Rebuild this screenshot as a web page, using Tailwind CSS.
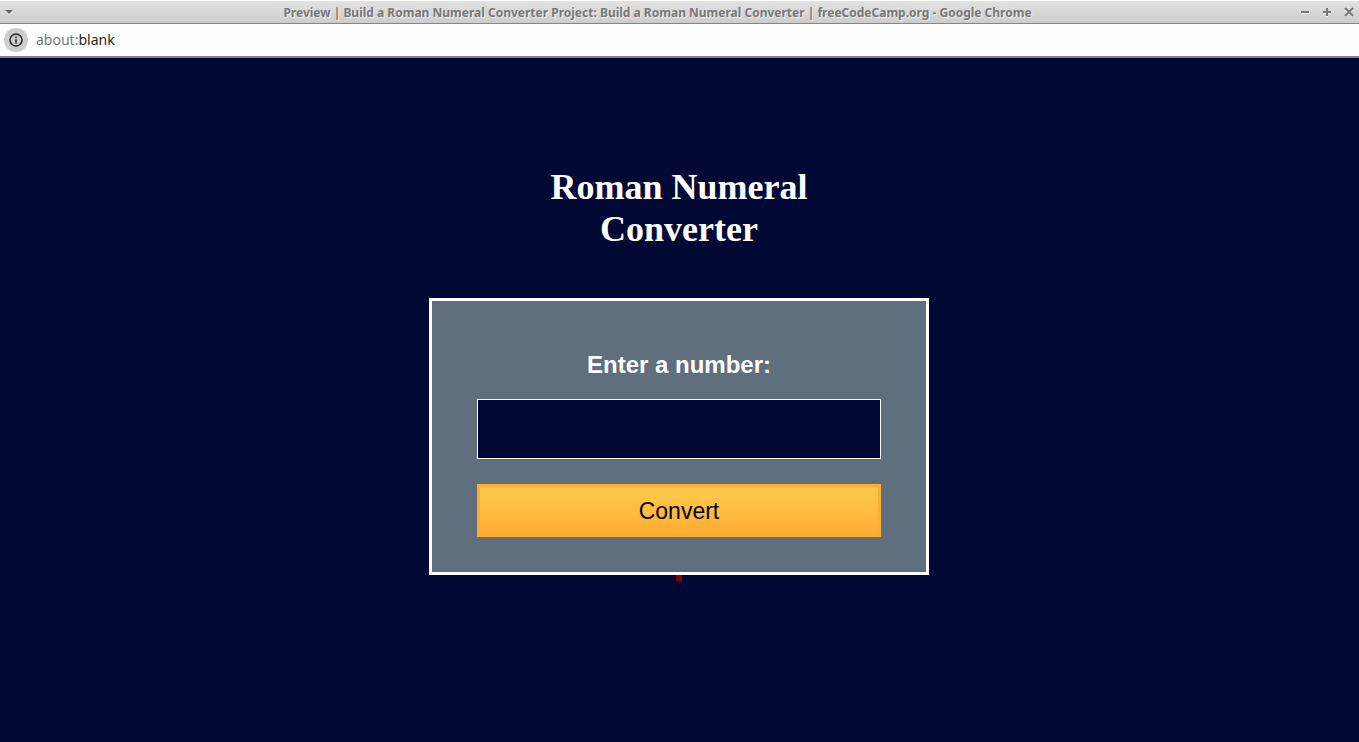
<!DOCTYPE html>
<html lang="en">
<head>
<meta charset="utf-8">
<meta name="viewport" content="width=device-width, initial-scale=1">
<title>Roman Numeral Converter</title>
<script src="https://cdn.jsdelivr.net/npm/@tailwindcss/browser@4"></script>
</head>
<body class="flex min-h-screen flex-col bg-[#000833]">
<header>
  <div class="flex h-6 items-center border-t border-b border-t-white border-b-[#858585] bg-linear-to-b from-[#e2e2e2] to-[#cdcdcd] text-[#777777]">
    <button type="button" aria-label="Window menu" class="flex w-14 pl-1">
      <svg class="h-[10px] w-[10px]" viewBox="0 0 10 10"><path d="M1 4h8L5 8z" fill="#fff" opacity=".7"/><path d="M1 3h8L5 7z" fill="#666"/></svg>
    </button>
    <div class="min-w-0 flex-1 truncate pt-[2px] text-center font-['Noto_Sans',sans-serif] text-[12px] leading-[20px] font-bold text-shadow-[1px_1px_0_#eeeeee]">Preview | Build a Roman Numeral Converter Project: Build a Roman Numeral Converter | freeCodeCamp.org - Google Chrome</div>
    <div class="flex w-[100px] justify-end gap-3 pr-[5px]">
      <button type="button" aria-label="Minimize"><svg class="h-[10px] w-[10px]" viewBox="0 0 10 10"><path d="M1 6h8v1H1z" fill="#eee"/><path d="M1 4h8v2H1z" fill="#777"/></svg></button>
      <button type="button" aria-label="Maximize"><svg class="h-[10px] w-[10px]" viewBox="0 0 10 10"><path d="M1 6h8v1H1zM4 9h2v1H4z" fill="#eee"/><path d="M1 4h8v2H1zM4 1h2v8H4z" fill="#777"/></svg></button>
      <button type="button" aria-label="Close"><svg class="h-[10px] w-[10px]" viewBox="0 0 10 10" fill="none" stroke-width="2"><path d="M1 2l8 8M9 2L1 10" stroke="#eee"/><path d="M1 1l8 8M9 1L1 9" stroke="#777"/></svg></button>
    </div>
  </div>
  <div class="flex h-[34px] items-center gap-2 border-b-2 border-[#808080] bg-[#fdfdfd] pl-1">
    <button type="button" aria-label="Site information" class="flex size-6 items-center justify-center rounded-full bg-[#cdcdcd]">
      <svg class="size-4" viewBox="0 0 16 16"><circle cx="8" cy="8" r="6" fill="none" stroke="#292929" stroke-width="1.6"/><path d="M7.2 7.2h1.6v4.2H7.2zM7.2 4.6h1.6v1.6H7.2z" fill="#292929"/></svg>
    </button>
    <div class="font-['Noto_Sans',sans-serif] text-[14px] leading-5 text-[#1f1f1f]"><span class="text-[#777777]">about:</span>blank</div>
  </div>
</header>
<main class="flex flex-1 flex-col items-center pt-[108px] pr-[17px] pl-4">
  <h1 class="w-full max-w-[300px] text-center font-['Liberation_Serif',serif] text-[36px] leading-[42px] font-bold text-white">Roman Numeral Converter</h1>
  <form class="mt-12 flex w-full max-w-[500px] flex-col border-3 border-white bg-[#5f6f7e] px-[45px] pt-[50px] pb-[35px] font-['Liberation_Sans',sans-serif] text-[24px] leading-[28px]">
    <label for="number" class="text-center font-bold text-white">Enter a number:</label>
    <input id="number" type="number" class="mt-5 h-[60px] w-full border border-white bg-[#000833] text-center text-white">
    <button type="button" class="mt-[25px] h-[53px] w-full border-3 border-[#feac32] bg-[#feac32] bg-linear-to-b from-[#fecc4c] to-[#ffac33] bg-origin-padding text-[23px] leading-[26px] text-black">Convert</button>
  </form>
  <output for="number" class="border-3 border-[#850000]"></output>
</main>
</body>
</html>
